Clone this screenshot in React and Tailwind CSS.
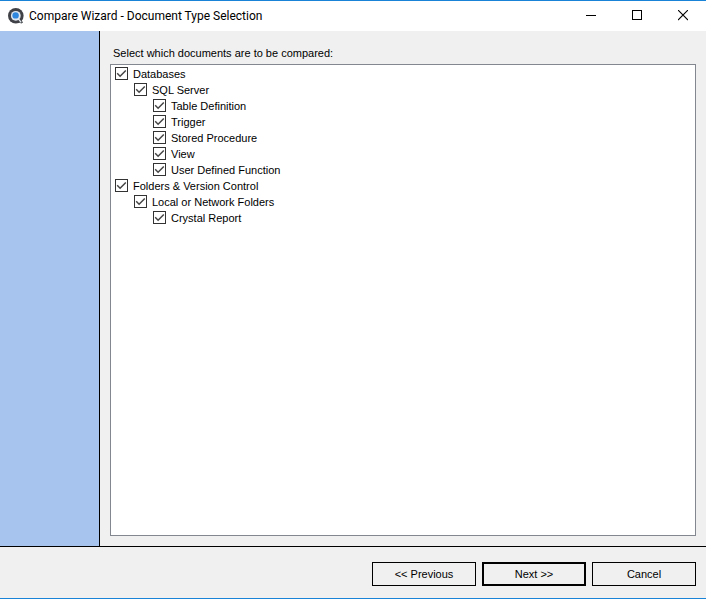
import React, { useState } from "react";

const documentTypes = [
  {
    id: "databases",
    label: "Databases",
    children: [
      {
        id: "sql-server",
        label: "SQL Server",
        children: [
          { id: "table-definition", label: "Table Definition" },
          { id: "trigger", label: "Trigger" },
          { id: "stored-procedure", label: "Stored Procedure" },
          { id: "view", label: "View" },
          { id: "user-defined-function", label: "User Defined Function" },
        ],
      },
    ],
  },
  {
    id: "folders",
    label: "Folders & Version Control",
    children: [
      {
        id: "local-folders",
        label: "Local or Network Folders",
        children: [{ id: "crystal-report", label: "Crystal Report" }],
      },
    ],
  },
];

function collectIds(node) {
  return [node.id, ...(node.children || []).flatMap(collectIds)];
}

function AppIcon() {
  return (
    <svg className="w-4 h-4" viewBox="0 0 16 16" aria-hidden="true">
      <circle cx="7.8" cy="7.8" r="7.8" fill="#3f4147" />
      <path d="M13 11.5l2 3-1.6 1-2.4-1z" fill="#3f4147" />
      <circle cx="7.8" cy="7.8" r="4.9" fill="#dfe6ee" />
      <path d="M10.2 10.6l3 3.8" stroke="#dfe6ee" strokeWidth="1.4" />
      <circle cx="7.6" cy="7.4" r="3.2" fill="#2f86dd" />
    </svg>
  );
}

function TitleButton({ label, children }) {
  return (
    <button aria-label={label} className="w-[46px] h-full flex items-center justify-center hover:bg-gray-200">
      <svg className="w-[10px] h-3" viewBox="0 0 10 12" fill="none" stroke="#000000" shapeRendering="crispEdges">
        {children}
      </svg>
    </button>
  );
}

function TitleBar() {
  return (
    <header className="h-[30px] bg-white flex items-center justify-between">
      <div className="flex items-center gap-[5px] pl-2">
        <AppIcon />
        <h1 className="font-[Roboto,sans-serif] text-[12px] leading-4">Compare Wizard - Document Type Selection</h1>
      </div>
      <div className="flex h-full">
        <TitleButton label="Minimize">
          <path d="M0 5.5h10" />
        </TitleButton>
        <TitleButton label="Maximize">
          <path d="M0.5 0.5h9v9h-9z" />
        </TitleButton>
        <TitleButton label="Close">
          <path d="M0 0l10 10M10 0l-10 10" shapeRendering="auto" strokeWidth="1.1" />
        </TitleButton>
      </div>
    </header>
  );
}

function TreeItem({ node, checked, onToggle }) {
  return (
    <li>
      <div className="flex items-start gap-[5px] h-4">
        <span className="grid shrink-0 pt-px">
          <input
            type="checkbox"
            id={node.id}
            checked={checked.includes(node.id)}
            onChange={() => onToggle(node)}
            className="peer col-start-1 row-start-1 appearance-none w-[13px] h-[13px] border border-[#333333] bg-white"
          />
          <svg
            className="invisible peer-checked:visible pointer-events-none col-start-1 row-start-1 w-[13px] h-[13px]"
            viewBox="0 0 13 13"
            fill="none"
            stroke="#444444"
            strokeWidth="1.5"
          >
            <path d="M2.2 6.3l2.9 2.9 5.7-5.7" />
          </svg>
        </span>
        <label htmlFor={node.id} className="whitespace-nowrap">
          {node.label}
        </label>
      </div>
      {node.children && (
        <ul className="pl-[19px]">
          {node.children.map((child) => (
            <TreeItem key={child.id} node={child} checked={checked} onToggle={onToggle} />
          ))}
        </ul>
      )}
    </li>
  );
}

export default function App() {
  const [checked, setChecked] = useState(documentTypes.flatMap(collectIds));

  // Toggling a parent takes everything below it along.
  const handleToggle = (node) => {
    const ids = collectIds(node);
    setChecked((prev) =>
      prev.includes(node.id) ? prev.filter((id) => !ids.includes(id)) : [...new Set([...prev, ...ids])]
    );
  };

  return (
    <div className="min-h-screen flex flex-col bg-[#f0f0f0] border-y border-[#1883d7] text-black font-['Liberation_Sans',Arial,sans-serif] text-[11px] leading-4">
      <TitleBar />
      <main className="flex flex-1">
        <aside className="w-[100px] shrink-0 bg-[#a6c4ed] border-r border-black" />
        <section className="flex flex-col flex-1 gap-[3px] pl-[10px] pr-[10px] pt-[14px] pb-[10px]">
          <p className="pl-[3px]">Select which documents are to be compared:</p>
          <ul className="flex-1 bg-white border border-[#828790] pt-px pl-1">
            {documentTypes.map((node) => (
              <TreeItem key={node.id} node={node} checked={checked} onToggle={handleToggle} />
            ))}
          </ul>
        </section>
      </main>
      <footer className="flex justify-end gap-[6px] border-t border-black pt-[15px] pb-3 pr-[10px]">
        <button className="w-[104px] h-6 border border-black">&lt;&lt; Previous</button>
        <button className="w-[104px] h-6 border-2 border-black">Next &gt;&gt;</button>
        <button className="w-[104px] h-6 border border-black">Cancel</button>
      </footer>
    </div>
  );
}
